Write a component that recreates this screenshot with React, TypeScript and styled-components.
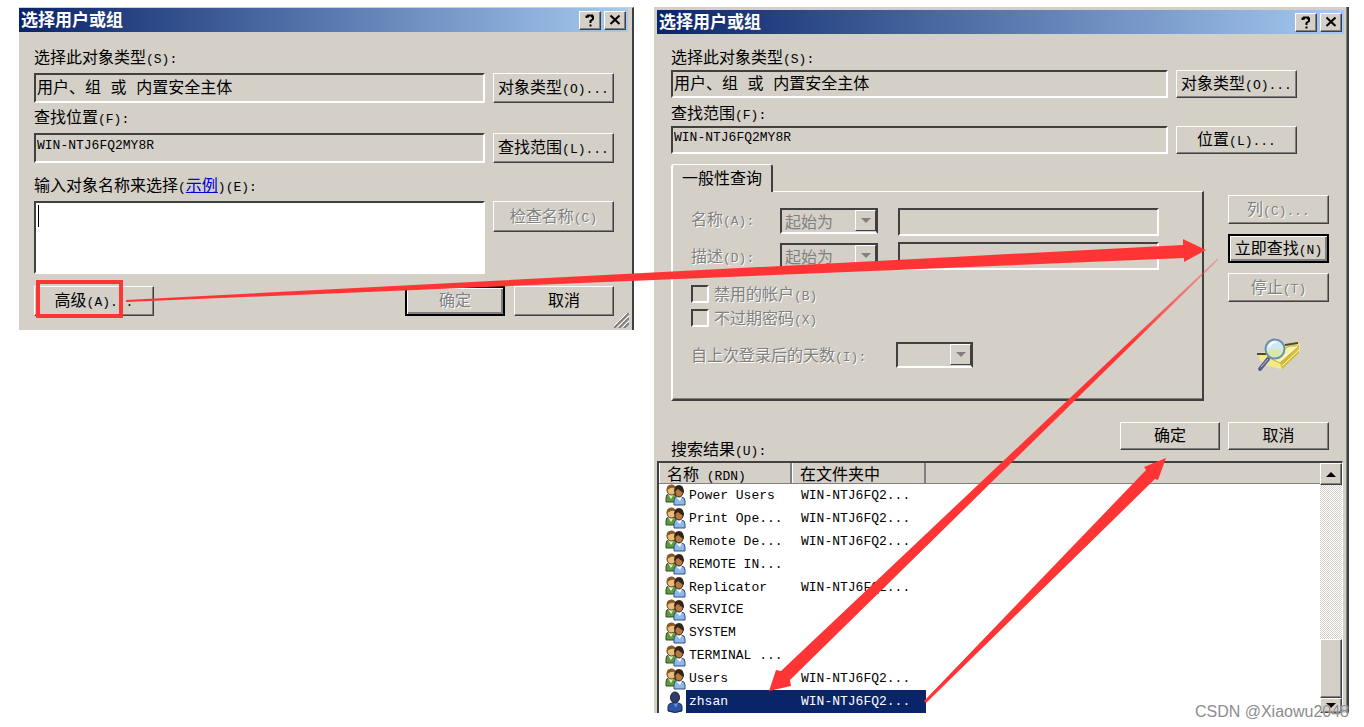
import React from "react";
import styled, { createGlobalStyle, css } from "styled-components";

const face = "#d4d0c8";
const shadow = "#808080";
const dark = "#404040";

const GlobalStyle = createGlobalStyle`
  *, *::before, *::after { box-sizing: border-box; }
  body { margin: 0; background: #fff; }
  body, button, input, select, textarea {
    font-family: "Noto Sans CJK SC", sans-serif;
    font-size: 16px;
    line-height: 20px;
    color: #000;
  }
`;

const Page = styled.main`
  position: relative;
  display: flex;
  align-items: flex-start;
  gap: 20px;
  padding: 7px 15px 14px 19px;
`;

const LeftDialog = styled.section`
  flex: 613 1 0;
  min-width: 0;
  position: relative;
  background: ${face};
  border-top: 1px solid ${face};
  border-right: 2px solid ${dark};
`;

const RightDialog = styled.section`
  flex: 690 1 0;
  min-width: 0;
  background: ${face};
  padding: 3px 0 0 3px;
  border-right: 2px solid ${dark};
  box-shadow: inset -1px 0 ${shadow};
`;

const TitleBar = styled.header<{ $inset: number }>`
  display: flex;
  align-items: center;
  gap: 3px;
  height: 24px;
  margin-right: ${(p) => p.$inset}px;
  padding: 0 2px;
  background: linear-gradient(to right, #0a246a, #a6caf0);
`;

const Title = styled.h1`
  flex: 1;
  margin: 0;
  padding-bottom: 2px;
  font-size: 17px;
  line-height: 22px;
  font-weight: 700;
  color: #fff;
`;

const CaptionButton = styled.button`
  display: grid;
  place-items: center;
  width: 22px;
  height: 19px;
  padding: 0;
  background: ${face};
  border: 1px solid;
  border-color: #fff ${dark} ${dark} #fff;
  box-shadow: inset -1px -1px ${shadow};
`;

const Latin = styled.span`
  font-family: "Liberation Mono", monospace;
  font-size: 13px;
  line-height: 1;
`;

const etched = css`
  color: ${shadow};
  text-shadow: 1px 1px #fff;
`;

const Push = styled.button<{ $main?: boolean }>`
  width: 100%;
  height: 30px;
  padding: 0 0 4px;
  white-space: nowrap;
  background: ${face};
  border: 1px solid;
  border-color: #fff ${dark} ${dark} #fff;
  box-shadow: inset -1px -1px ${shadow};
  ${(p) =>
    p.$main &&
    css`
      border: 2px solid #000;
      box-shadow: inset 1px 1px #fff, inset -2px -2px ${shadow};
    `}
  &:disabled { ${etched} }
`;

const sunken = css`
  border: 2px solid;
  border-color: ${dark} #fff #fff ${dark};
  border-radius: 0;
  outline: none;
`;

const Form = styled.form<{ $rows: string; $padding: string }>`
  display: grid;
  grid-template-columns: minmax(0, 1fr) 121px;
  grid-template-rows: ${(p) => p.$rows};
  column-gap: 8px;
  padding: ${(p) => p.$padding};
  ${Push} { height: 100%; }
`;

const FieldLabel = styled.label<{ $gap: number }>`
  grid-column: 1 / -1;
  align-self: end;
  padding-bottom: ${(p) => p.$gap}px;
  white-space: nowrap;
`;

const Field = styled.input<{ $latin?: boolean }>`
  ${sunken}
  width: 100%;
  height: 100%;
  min-width: 0;
  padding: 0 0 5px 1px;
  background: ${face};
  font-family: "Liberation Mono", "Noto Sans CJK SC", monospace;
  ${(p) => p.$latin && "font-size: 13px;"}
`;

const Names = styled.textarea`
  ${sunken}
  width: 100%;
  height: 73px;
  padding: 2px;
  resize: none;
  background: #fff;
`;

const Entry = styled.div`
  position: relative;
  height: 73px;
`;

const Caret = styled.span`
  position: absolute;
  left: 4px;
  top: 4px;
  width: 1px;
  height: 22px;
  background: #000;
`;

const Check = styled.div`
  height: 31px;
`;

const Example = styled.a`
  color: #0000d0;
  text-decoration: underline;
`;

const Footer = styled.div`
  display: grid;
  grid-template-columns: 120px 1fr 100px 100px;
  column-gap: 9px;
  padding: 12px 18px 14px 15px;
`;

const Spot = styled.div`
  position: relative;
  &::after {
    content: "";
    position: absolute;
    left: 2px;
    top: -6px;
    width: 87px;
    height: 38px;
    border: 4px solid #ff3535;
  }
`;

const Grip = styled.svg`
  position: absolute;
  right: 3px;
  bottom: 2px;
`;

const Middle = styled.div`
  display: grid;
  grid-template-columns: minmax(0, 1fr) 101px;
  column-gap: 24px;
  padding: 10px 18px 0 14px;
`;

const Tab = styled.button`
  position: relative;
  display: block;
  width: 102px;
  height: 28px;
  padding: 0 8px 4px;
  background: ${face};
  border: solid;
  border-width: 1px 2px 0 2px;
  border-color: #fff ${dark} #fff #fff;
  border-radius: 3px 3px 0 0;
  white-space: nowrap;
`;

const Panel = styled.div`
  height: 210px;
  margin-top: -1px;
  padding: 16px 43px 0 18px;
  border: solid;
  border-width: 1px 2px 2px 2px;
  border-color: #fff ${dark} ${dark} #fff;
  box-shadow: inset 0 -1px ${shadow};
`;

const Query = styled.div<{ $align: string }>`
  display: grid;
  grid-template-columns: 89px 98px minmax(0, 1fr);
  align-items: ${(p) => p.$align};
  height: 28px;
  margin-bottom: 6px;
  ${Field} { margin-left: 20px; width: auto; }
`;

const DimLabel = styled.label`
  ${etched}
  padding-bottom: 3px;
  white-space: nowrap;
`;

const Drop = styled.div<{ $width: number }>`
  position: relative;
  width: ${(p) => p.$width}px;
  height: 26px;
`;

const Choice = styled.select`
  ${sunken}
  appearance: none;
  width: 100%;
  height: 100%;
  padding: 0 24px 0 3px;
  background: ${face};
  opacity: 1;
  color: ${shadow};
  border-right-color: ${dark};
`;

const DropArrow = styled.span`
  position: absolute;
  right: 2px;
  top: 2px;
  display: grid;
  place-items: center;
  width: 21px;
  height: 21px;
  pointer-events: none;
  background: ${face};
  border: 1px solid;
  border-color: #fff ${dark} ${dark} #fff;
`;

const Tick = styled.div`
  display: flex;
  align-items: center;
  gap: 5px;
  height: 24px;
`;

const TickBox = styled.input`
  ${sunken}
  appearance: none;
  width: 18px;
  height: 18px;
  margin: 0;
`;

const Days = styled.div`
  display: flex;
  align-items: center;
  justify-content: space-between;
  width: 282px;
  margin-top: 12px;
`;

const Ticks = styled.div`
  padding-top: 6px;
`;

const Side = styled.div`
  display: flex;
  flex-direction: column;
  gap: 10px;
  padding-top: 31px;
  ${Push} { height: 29px; flex: none; }
`;

const SearchArt = styled.svg`
  align-self: center;
  margin-top: 26px;
`;

const Actions = styled.div`
  display: grid;
  grid-template-columns: 1fr 100px 101px;
  column-gap: 8px;
  height: 60px;
  padding: 21px 18px 3px 14px;
  ${Push} { height: 28px; }
`;

const ResultLabel = styled.h2`
  align-self: end;
  margin: 0;
  font-size: 16px;
  font-weight: 400;
`;

const ListBox = styled.div`
  display: flex;
  height: 252px;
  margin-right: 4px;
  overflow: hidden;
  background: #fff;
  border: solid;
  border-width: 2px 1px 0 2px;
  border-color: ${dark} #fff #fff ${dark};
`;

const Results = styled.table`
  flex: 1;
  width: 100%;
  height: 250px;
  border-collapse: separate;
  border-spacing: 0;
  table-layout: fixed;
  text-align: left;
`;

const Head = styled.th<{ $width?: number }>`
  ${(p) => p.$width && `width: ${p.$width}px; box-shadow: inset -2px 0 ${shadow}, inset 1px 0 #fff;`}
  height: 21px;
  padding: 0 8px;
  background: ${face};
  border-bottom: 1px solid ${shadow};
  font-weight: 400;
  white-space: nowrap;
`;

const Cell = styled.td`
  padding: 0 0 0 9px;
  white-space: nowrap;
`;

const NameCell = styled.td`
  padding: 0 0 0 6px;
  white-space: nowrap;
`;

const Row = styled.tr<{ $on?: boolean }>`
  ${(p) =>
    p.$on &&
    css`
      color: #fff;
      ${NameCell} { background: linear-gradient(to right, #fff 27px, #0a246a 27px); }
      ${Cell}:nth-child(2) { background: #0a246a; }
    `}
`;

const Entity = styled.span`
  display: flex;
  align-items: center;
  gap: 3px;
  height: 22px;
`;

const Scroll = styled.div`
  flex: none;
  display: flex;
  flex-direction: column;
  width: 22px;
  background: repeating-conic-gradient(${face} 0 25%, #fff 0 50%) 0 0 / 2px 2px;
`;

const ScrollPart = styled.button<{ $height: number }>`
  display: grid;
  place-items: center;
  flex: none;
  width: 22px;
  height: ${(p) => p.$height}px;
  padding: 0;
  background: ${face};
  border: 1px solid;
  border-color: #fff ${dark} ${dark} #fff;
  box-shadow: inset -1px -1px ${shadow};
`;

const Track = styled.div`
  flex: 1;
`;

const Arrows = styled.svg`
  position: absolute;
  left: 0;
  top: 0;
  width: 100%;
  pointer-events: none;
`;

const Watermark = styled.span`
  position: absolute;
  right: 15px;
  bottom: 5px;
  font-family: "Liberation Sans", sans-serif;
  color: #8c8c8c;
  text-shadow: 0 0 1px #fff;
`;

/* Sets the half-width runs of a caption in the narrow fixed-pitch face. */
function Mixed({ text }: { text: string }) {
  return (
    <>
      {text.split(/([\x20-\x7e]+)/).map((part, i) =>
        i % 2 ? <Latin key={i}>{part}</Latin> : part
      )}
    </>
  );
}

function Caption({ inset }: { inset: number }) {
  return (
    <TitleBar $inset={inset}>
      <Title>选择用户或组</Title>
      <CaptionButton type="button" aria-label="帮助">
        <svg width="12" height="13" viewBox="0 0 12 13" fill="none" stroke="#000" strokeWidth="2">
          <path d="M2.500 4V2.500H4V1.500H8V2.500H9V5L6.500 7V9M6.500 10.500V12.500" />
        </svg>
      </CaptionButton>
      <CaptionButton type="button" aria-label="关闭">
        <svg width="12" height="12" viewBox="0 0 12 12" stroke="#000" strokeWidth="2">
          <path d="M1.500 1.500L10.500 10M10.500 1.500L1.500 10" />
        </svg>
      </CaptionButton>
    </TitleBar>
  );
}

function Triangle({ up, color = "#000" }: { up?: boolean; color?: string }) {
  return (
    <svg width="10" height="5" viewBox="0 0 10 5">
      <path d={up ? "M0 5L5 0L10 5Z" : "M0 0L5 5L10 0Z"} fill={color} />
    </svg>
  );
}

function Dropdown({ id, value, width }: { id: string; value: string; width: number }) {
  return (
    <Drop $width={width}>
      <Choice id={id} disabled>
        <option>{value}</option>
      </Choice>
      <DropArrow>
        <Triangle color={shadow} />
      </DropArrow>
    </Drop>
  );
}

function GroupIcon() {
  return (
    <svg width="21" height="22" viewBox="0 0 21 22">
      <path d="M1 18V14Q1 10 4 10H9Q12 11 12 18Z" fill="#5f9a3c" stroke="#2f4f24" />
      <path d="M3 10L6 15L9 10Z" fill="#e8f0d8" />
      <ellipse cx="6.500" cy="6" rx="4.500" ry="5" fill="#e8bd7c" stroke="#5b3a18" />
      <path d="M2 6Q1 1 6 1Q10 1 11 4Q6 3 4 5Z" fill="#8b5a1e" />
      <path d="M9 21V17Q9 13 12 13H16Q20 13 20 17V21Z" fill="#8fb8ea" stroke="#34507e" />
      <path d="M11 13L15 17L17 13Z" fill="#fff" />
      <ellipse cx="14" cy="8" rx="4" ry="5" fill="#b87a42" stroke="#3b2415" />
      <path d="M9 8Q9 1 14 1Q19 1 19 9Q15 7 13 5Z" fill="#33231a" />
    </svg>
  );
}

function UserIcon() {
  return (
    <svg width="21" height="22" viewBox="0 0 21 22">
      <path d="M3 20V16Q3 12 8 12H12Q17 12 17 16V20Q10 23 3 20Z" fill="#2a55a5" stroke="#102558" />
      <path d="M8 12L11 17L13 12Z" fill="#6c8fd0" />
      <ellipse cx="10" cy="6.500" rx="4.500" ry="5.500" fill="#303c66" stroke="#141c3c" />
    </svg>
  );
}

const results: { name: string; folder: string; on?: boolean }[] = [
  { name: "Power Users", folder: "WIN-NTJ6FQ2..." },
  { name: "Print Ope...", folder: "WIN-NTJ6FQ2..." },
  { name: "Remote De...", folder: "WIN-NTJ6FQ2..." },
  { name: "REMOTE IN...", folder: "" },
  { name: "Replicator", folder: "WIN-NTJ6FQ2..." },
  { name: "SERVICE", folder: "" },
  { name: "SYSTEM", folder: "" },
  { name: "TERMINAL ...", folder: "" },
  { name: "Users", folder: "WIN-NTJ6FQ2..." },
  { name: "zhsan", folder: "WIN-NTJ6FQ2...", on: true },
];

function SimpleDialog() {
  return (
    <LeftDialog>
      <Caption inset={4} />
      <Form $rows="41px 30px 30px 30px 38px 73px" $padding="0 18px 0 15px">
        <FieldLabel $gap={7} htmlFor="type-a"><Mixed text="选择此对象类型(S):" /></FieldLabel>
        <Field id="type-a" readOnly value="用户、组 或 内置安全主体" />
        <Push type="button"><Mixed text="对象类型(O)..." /></Push>
        <FieldLabel $gap={7} htmlFor="place-a"><Mixed text="查找位置(F):" /></FieldLabel>
        <Field id="place-a" $latin readOnly value="WIN-NTJ6FQ2MY8R" />
        <Push type="button"><Mixed text="查找范围(L)..." /></Push>
        <FieldLabel $gap={7} htmlFor="names">
          <Mixed text="输入对象名称来选择(" />
          <Example href="#example">示例</Example>
          <Mixed text=")(E):" />
        </FieldLabel>
        <Entry>
          <Names id="names" />
          <Caret />
        </Entry>
        <Check>
          <Push type="button" disabled><Mixed text="检查名称(C)" /></Push>
        </Check>
      </Form>
      <Footer>
        <Spot>
          <Push type="button"><Mixed text="高级(A)..." /></Push>
        </Spot>
        <span />
        <Push type="button" $main disabled>确定</Push>
        <Push type="button">取消</Push>
      </Footer>
      <Grip width="15" height="15" viewBox="0 0 15 15" strokeWidth="2">
        <path d="M0 15L15 0M5 15L15 5M10 15L15 10" stroke={shadow} />
        <path d="M-1 14L14 -1M4 14L15 3M9 14L15 8" stroke="#fff" strokeWidth="1" />
      </Grip>
    </LeftDialog>
  );
}

function SearchDialog() {
  return (
    <RightDialog>
      <Caption inset={3} />
      <Form $rows="36px 28px 28px 28px" $padding="0 50px 0 14px">
        <FieldLabel $gap={4} htmlFor="type-b"><Mixed text="选择此对象类型(S):" /></FieldLabel>
        <Field id="type-b" readOnly value="用户、组 或 内置安全主体" />
        <Push type="button"><Mixed text="对象类型(O)..." /></Push>
        <FieldLabel $gap={4} htmlFor="place-b"><Mixed text="查找范围(F):" /></FieldLabel>
        <Field id="place-b" $latin readOnly value="WIN-NTJ6FQ2MY8R" />
        <Push type="button"><Mixed text="位置(L)..." /></Push>
      </Form>
      <Middle>
        <div>
          <Tab type="button">一般性查询</Tab>
          <Panel>
            <Query $align="start">
              <DimLabel htmlFor="name-rule"><Mixed text="名称(A):" /></DimLabel>
              <Dropdown id="name-rule" value="起始为" width={98} />
              <Field disabled aria-label="名称" />
            </Query>
            <Query $align="center">
              <DimLabel htmlFor="desc-rule"><Mixed text="描述(D):" /></DimLabel>
              <Dropdown id="desc-rule" value="起始为" width={98} />
              <Field disabled aria-label="描述" />
            </Query>
            <Ticks>
              <Tick>
                <TickBox type="checkbox" id="off" disabled />
                <DimLabel htmlFor="off"><Mixed text="禁用的帐户(B)" /></DimLabel>
              </Tick>
              <Tick>
                <TickBox type="checkbox" id="keep" disabled />
                <DimLabel htmlFor="keep"><Mixed text="不过期密码(X)" /></DimLabel>
              </Tick>
            </Ticks>
            <Days>
              <DimLabel htmlFor="days"><Mixed text="自上次登录后的天数(I):" /></DimLabel>
              <Dropdown id="days" value="" width={77} />
            </Days>
          </Panel>
        </div>
        <Side>
          <Push type="button" disabled><Mixed text="列(C)..." /></Push>
          <Push type="button" $main><Mixed text="立即查找(N)" /></Push>
          <Push type="button" disabled><Mixed text="停止(T)" /></Push>
          <SearchArt width="46" height="34" viewBox="0 0 46 34">
            <path d="M2 17L24 6L44 5L44 14L25 31L8 27L4 22Z" fill="#f1e98a" />
            <path d="M24 25L43 9V15L26 31Z" fill="#cfbd3a" />
            <path d="M11 19L34 8L43 8L24 25Z" fill="#f7f2a8" stroke="#b9aa3e" />
            <path d="M26 28L43 12M25 22L41 8" stroke="#fffbd0" strokeWidth="1" />
            <path d="M1 16H10M29 7L42 5" stroke="#4c4a2c" strokeWidth="2" />
            <path d="M12 21L4 31" stroke="#5a5f92" strokeWidth="4" strokeLinecap="round" />
            <path d="M12 21L5 29" stroke="#b9c0e4" strokeWidth="1" />
            <circle cx="19" cy="11" r="9.500" fill="#cfe8f4" stroke="#6c8fae" strokeWidth="2" />
            <path d="M11 13Q18 9 27 13Q25 19 19 19Q13 19 11 13Z" fill="#d9e8a8" />
            <path d="M13 9Q15 4 20 4" stroke="#fff" strokeWidth="2" fill="none" />
          </SearchArt>
        </Side>
      </Middle>
      <Actions>
        <ResultLabel><Mixed text="搜索结果(U):" /></ResultLabel>
        <Push type="button">确定</Push>
        <Push type="button">取消</Push>
      </Actions>
      <ListBox>
        <Results>
          <thead>
            <tr>
              <Head $width={133}><Mixed text="名称 (RDN)" /></Head>
              <Head $width={134}>在文件夹中</Head>
              <Head aria-label="其他" />
            </tr>
          </thead>
          <tbody>
            {results.map((r) => (
              <Row key={r.name} $on={r.on}>
                <NameCell>
                  <Entity>
                    {r.on ? <UserIcon /> : <GroupIcon />}
                    <Latin>{r.name}</Latin>
                  </Entity>
                </NameCell>
                <Cell>
                  <Entity>
                    <Latin>{r.folder}</Latin>
                  </Entity>
                </Cell>
                <Cell />
              </Row>
            ))}
          </tbody>
        </Results>
        <Scroll>
          <ScrollPart type="button" $height={22} aria-label="向上滚动"><Triangle up /></ScrollPart>
          <Track />
          <ScrollPart type="button" $height={59} aria-label="滚动块" />
          <ScrollPart type="button" $height={15} aria-label="向下滚动"><Triangle /></ScrollPart>
        </Scroll>
      </ListBox>
    </RightDialog>
  );
}

export default function App() {
  return (
    <>
      <GlobalStyle />
      <Page>
        <SimpleDialog />
        <SearchDialog />
        <Arrows viewBox="0 0 1364 727">
          <defs>
            <linearGradient id="fade" gradientUnits="userSpaceOnUse" x1="1218" y1="259" x2="1130" y2="343">
              <stop offset="0" stopColor="#ff3535" stopOpacity="0.3" />
              <stop offset="1" stopColor="#ff3535" />
            </linearGradient>
          </defs>
          <path d="M126 300L1183 245V239L1206 250L1184 262V258L126 302Z" fill="#ff3535" />
          <path d="M1218 258L781 671L776 670L769 691L791 686L790 680L1218 260Z" fill="url(#fade)" />
          <path d="M924 701L1146 470L1144 467L1166 458L1158 480L1155 479L926 703Z" fill="#ff3535" />
        </Arrows>
        <Watermark>CSDN @Xiaowu2048</Watermark>
      </Page>
    </>
  );
}
